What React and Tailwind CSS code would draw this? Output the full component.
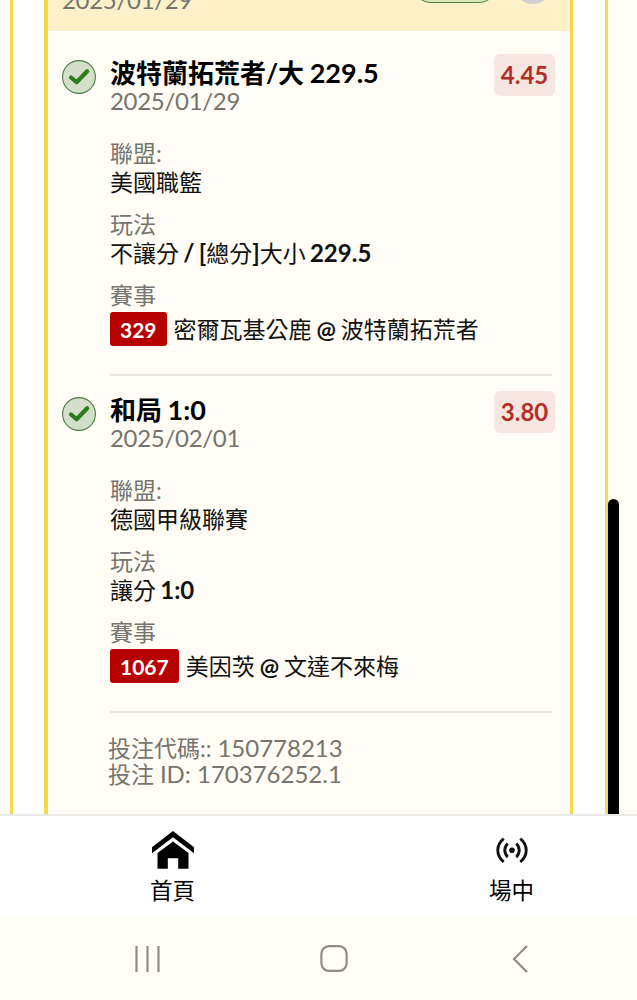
import React from 'react';

const bets = [
    {
        id: 1,
        title: '波特蘭拓荒者/大',
        line: '229.5',
        date: '2025/01/29',
        odds: '4.45',
        league: '美國職籃',
        market: [
            { text: '不讓分' },
            { text: ' / [', bold: true },
            { text: '總分' },
            { text: ']', bold: true },
            { text: '大小' },
            { text: ' 229.5', bold: true },
        ],
        code: '329',
        away: '密爾瓦基公鹿',
        home: '波特蘭拓荒者',
    },
    {
        id: 2,
        title: '和局',
        line: '1:0',
        date: '2025/02/01',
        odds: '3.80',
        league: '德國甲級聯賽',
        market: [
            { text: '讓分' },
            { text: ' 1:0', bold: true },
        ],
        code: '1067',
        away: '美因茨',
        home: '文達不來梅',
    },
];

const WonIcon = () => (
    <svg className="mt-[6px] h-[34px] w-[34px] shrink-0" viewBox="0 0 34 34" fill="none">
        <circle cx="17" cy="17" r="16.4" fill="#d3dfc8" stroke="#4b7f45" strokeWidth="1.1" />
        <path d="M9 17.5L14.6 22.2L25.2 11.2" stroke="#2f7a1c" strokeWidth="4.2" strokeLinecap="round" strokeLinejoin="round" />
    </svg>
);

const Field = ({ label, children }) => (
    <div className="mb-[14px] text-[23px]">
        <div className="h-[29px] leading-7 text-[#75746f]">{label}</div>
        <div className="h-7 leading-7 whitespace-nowrap text-[#111]">{children}</div>
    </div>
);

const Bet = ({ bet }) => (
    <div className="flex h-[337px] pt-[15px] pl-[14px]">
        <WonIcon />
        <div className="ml-[14px] w-[442px] border-b-2 border-[#e6e5df]">
            <div className="flex h-[85px] justify-between">
                <div className="pt-[5px] whitespace-nowrap">
                    <div className="h-7 text-[26px] leading-7 font-bold text-black">
                        {bet.title}
                        <span className="text-[27px] [word-spacing:-1px]"> {bet.line}</span>
                    </div>
                    <div className="h-7 text-[24px] leading-7 tracking-[-0.3px] text-[#75746f]">{bet.date}</div>
                </div>
                <div className="-mr-[3px] flex h-[42px] w-[61px] items-center justify-center rounded-md bg-[#f7e6df] text-[24px] font-bold text-[#b03029]">
                    {bet.odds}
                </div>
            </div>

            <Field label="聯盟:">{bet.league}</Field>
            <Field label="玩法">
                {bet.market.map((part, i) => (
                    <span key={i} className={part.bold ? 'text-[24px] font-bold [word-spacing:-1.6px]' : ''}>{part.text}</span>
                ))}
            </Field>

            <div className="text-[23px]">
                <div className="h-[31px] leading-7 text-[#75746f]">賽事</div>
                <div className="flex items-center whitespace-nowrap text-[#111]">
                    <span className="flex h-[34px] items-center rounded-[3px] bg-[#b70000] px-[10px] text-[21px] font-bold text-white">
                        {bet.code}
                    </span>
                    <span className="ml-[7px] [word-spacing:-1px]">
                        {bet.away} <span className="font-bold">@</span> {bet.home}
                    </span>
                </div>
            </div>
        </div>
    </div>
);

const HomeIcon = () => (
    <svg className="h-[38px] w-[42px]" viewBox="0 0 42 38" fill="#000">
        <path d="M21 0L42 16.2V22.2L21 6.2L0 22.2V16.2Z" />
        <path d="M21 10.5L36.5 22V37.7H26.2V27.3H15.8V37.7H5.5V22Z" />
    </svg>
);

const LiveIcon = () => (
    <svg className="h-[38px] w-8" viewBox="0 0 32 38" fill="none" stroke="#111" strokeWidth="2.9">
        <circle cx="16" cy="19.3" r="2.8" fill="#111" stroke="none" />
        <path d="M11.7 12.5C7.8 16.4 7.8 22.2 11.7 26.1M20.3 12.5C24.2 16.4 24.2 22.2 20.3 26.1" />
        <path d="M7.7 7.6C-.2 14.2-.2 24.4 7.7 31M24.3 7.6C32.2 14.2 32.2 24.4 24.3 31" />
    </svg>
);

const NavItem = ({ icon, label }) => (
    <div className="flex w-[339px] shrink-0 flex-col items-center pt-[15px]">
        {icon}
        <span className="mt-[8px] text-[22.5px] leading-7 text-black">{label}</span>
    </div>
);

const App = () => {
    return (
        <div className="flex h-[1000px] w-[637px] flex-col overflow-hidden bg-[#fffdf5] font-['Lato','Noto_Sans_CJK_TC',sans-serif]">
            <div className="relative h-[814px] overflow-hidden">
                <div className="ml-[10px] flex h-full w-[598px] border-x-[3px] border-[#f4d94c] bg-white">
                    <div className="ml-[31px] h-full w-[529px] border-r-[3px] border-l-4 border-[#f4d94c] bg-[#fffdf5]">
                        {/* Header of the slip, scrolled almost out of view */}
                        <div className="flex h-[31px] items-end overflow-hidden bg-[#fef1ca] pl-[14px]">
                            <span className="mb-[17px] w-[133px] text-[24px] leading-7 tracking-[-0.3px] text-[#75746f]">2025/01/29</span>
                            <span className="mb-[28px] ml-[218px] h-9 w-[84px] shrink-0 rounded-full border border-[#4b7f45] bg-[#d9e8b5]"></span>
                            <span className="mb-[27px] ml-[16px] h-10 w-10 shrink-0 rounded-full bg-[#d3cecf]"></span>
                        </div>

                        <div className="pt-2">
                            {bets.map((bet) => (
                                <Bet key={bet.id} bet={bet} />
                            ))}
                        </div>

                        <div className="pt-[22px] pl-[60px] text-[23px] leading-[26px] text-[#75746f]">
                            <div className="h-[26px]">投注代碼:: <span className="text-[24px]">150778213</span></div>
                            <div className="h-[26px]">投注 <span className="text-[24px]">ID: 170376252.1</span></div>
                        </div>
                    </div>
                </div>
                {/* Scrollbar */}
                <div className="absolute top-[499px] right-[18px] h-[315px] w-[11px] rounded-t-full bg-black"></div>
            </div>

            <nav className="flex h-[103px] overflow-hidden border-t-2 border-[#ebe9e6] bg-white pl-[3px]">
                <NavItem icon={<HomeIcon />} label="首頁" />
                <NavItem icon={<LiveIcon />} label="場中" />
            </nav>

            {/* System buttons */}
            <div className="flex h-[83px] items-center pl-[135px]">
                <svg className="h-[26px] w-[25px]" viewBox="0 0 25 26" stroke="#8e8d87" strokeWidth="2.2">
                    <path d="M1.5 0V26M12.5 0V26M23.5 0V26" />
                </svg>
                <svg className="ml-[160px] h-[27px] w-7" viewBox="0 0 28 27" fill="none" stroke="#8e8d87" strokeWidth="2.2">
                    <rect x="1.4" y="1.2" width="25.2" height="24.6" rx="7.5" />
                </svg>
                <svg className="ml-[164px] h-7 w-4" viewBox="0 0 16 28" fill="none" stroke="#8e8d87" strokeWidth="2.2">
                    <path d="M15 1L2 14L15 27" />
                </svg>
            </div>
        </div>
    );
};

export default App;
